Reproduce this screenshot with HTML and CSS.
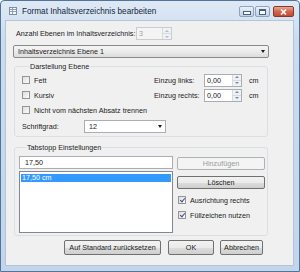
FILE: index.html
```html
<!DOCTYPE html>
<html lang="de">
<head>
    <meta charset="UTF-8">
    <title>Format Inhaltsverzeichnis bearbeiten</title>
    <link rel="stylesheet" href="styles.css">
</head>
<body>
    <div class="window">
        <div class="titlebar">
            <svg class="app-icon" width="8" height="8" viewBox="0 0 8 8">
                <rect x="0.5" y="0.5" width="7" height="7" fill="#f4f7fb" stroke="#7d8fa6"/>
                <path d="M1 2.5h6M1 4.5h6M3.5 1v6" stroke="#8fa2ba" stroke-width="1"/>
            </svg>
            <span class="title">Format Inhaltsverzeichnis bearbeiten</span>
            <div class="caption-buttons">
                <span class="cap cap-min"><i></i></span>
                <span class="cap cap-max"><i></i></span>
                <span class="cap cap-close">
                    <svg width="7" height="6" viewBox="0 0 7 6"><path d="M1 0.5l5 5M6 0.5l-5 5" stroke="#fff" stroke-width="1.6"/></svg>
                </span>
            </div>
        </div>

        <div class="client">
            <div class="count-row">
                <span class="count-label">Anzahl Ebenen im Inhaltsverzeichnis:</span>
                <div class="spin spin-disabled">
                    <span class="spin-value">3</span>
                    <span class="spin-arrows"><i class="up"></i><i class="down"></i></span>
                </div>
            </div>

            <div class="combo combo-level">
                <span>Inhaltsverzeichnis Ebene 1</span>
                <span class="arrow"></span>
            </div>

            <fieldset class="group group-style">
                <legend>Darstellung Ebene</legend>
                <div class="style-row">
                    <label class="check"><span class="box"></span>Fett</label>
                    <span class="indent-label">Einzug links:</span>
                    <div class="spin spin-indent">
                        <span class="spin-value">0,00</span>
                        <span class="spin-arrows"><i class="up"></i><i class="down"></i></span>
                    </div>
                    <span class="unit">cm</span>
                </div>
                <div class="style-row">
                    <label class="check"><span class="box"></span>Kursiv</label>
                    <span class="indent-label">Einzug rechts:</span>
                    <div class="spin spin-indent">
                        <span class="spin-value">0,00</span>
                        <span class="spin-arrows"><i class="up"></i><i class="down"></i></span>
                    </div>
                    <span class="unit">cm</span>
                </div>
                <div class="style-row">
                    <label class="check"><span class="box"></span>Nicht vom nächsten Absatz trennen</label>
                </div>
                <div class="style-row size-row">
                    <span class="size-label">Schriftgrad:</span>
                    <div class="combo combo-edit">
                        <span>12</span>
                        <span class="arrow"></span>
                    </div>
                </div>
            </fieldset>

            <fieldset class="group group-tabs">
                <legend>Tabstopp Einstellungen</legend>
                <div class="tabs-grid">
                    <div class="tabs-left">
                        <div class="textbox">17,50</div>
                        <div class="listbox">
                            <div class="list-item selected">17,50 cm</div>
                        </div>
                    </div>
                    <div class="tabs-right">
                        <button class="btn btn-disabled btn-add">Hinzufügen</button>
                        <button class="btn btn-delete">Löschen</button>
                        <label class="check check-align"><span class="box checked"></span>Ausrichtung rechts</label>
                        <label class="check check-fill"><span class="box checked"></span>Füllzeichen nutzen</label>
                    </div>
                </div>
            </fieldset>

            <div class="footer">
                <button class="btn btn-reset">Auf Standard zurücksetzen</button>
                <button class="btn btn-ok">OK</button>
                <button class="btn btn-cancel">Abbrechen</button>
            </div>
        </div>
    </div>
</body>
</html>
```

FILE: styles.css
```css
html, body {
    margin: 0;
    padding: 0;
    width: 300px;
    height: 272px;
    overflow: hidden;
}
body {
    font-family: "Liberation Sans", Arial, sans-serif;
    font-size: 7.2px;
    color: #1b1b1b;
    white-space: nowrap;
}
.window {
    box-sizing: border-box;
    width: 300px;
    height: 272px;
    display: flex;
    flex-direction: column;
    padding: 0 5px 5px 4px;
    background: linear-gradient(#dfe9f5, #cbdcee 40px, #c2d5ea);
    border: 1px solid #52739a;
    border-radius: 4px 4px 0 0;
}

/* title bar */
.titlebar {
    height: 19px;
    display: flex;
    align-items: center;
    position: relative;
}
.app-icon {
    margin-left: 4px;
    margin-top: 1px;
}
.title {
    margin-left: 5px;
    margin-top: 2px;
    font-size: 8.2px;
    color: #14253b;
}
.caption-buttons {
    position: absolute;
    right: 0;
    top: 5px;
    display: flex;
}
.cap {
    box-sizing: border-box;
    height: 11px;
    display: flex;
    align-items: center;
    justify-content: center;
    border: 1px solid #8ea3bd;
    border-radius: 2px;
    background: linear-gradient(#eaf1f9, #d3e0ef 50%, #c0d2e7);
}
.cap-min { width: 15px; }
.cap-max { width: 15px; margin-left: 1px; }
.cap-close {
    width: 21px;
    margin-left: 3px;
    border-color: #84392b;
    background: linear-gradient(#e9a896, #d3664f 50%, #c44a32);
}
.cap-min i {
    width: 6px;
    height: 2px;
    margin-top: 3px;
    background: #fff;
    border: 1px solid #4a6282;
}
.cap-max i {
    width: 5px;
    height: 3px;
    border: 1px solid #4a6282;
    border-top-width: 2px;
    background: #fff;
}

/* client area */
.client {
    flex: 1;
    display: flex;
    flex-direction: column;
    padding: 0 24px 0 7px;
    background: #f0f0f0;
    border: 1px solid #b3c5da;
}
.count-row {
    display: flex;
    align-items: center;
    margin-top: 6px;
    height: 13px;
}
.count-label {
    flex: 0 0 120px;
    padding-left: 3px;
}

.spin {
    box-sizing: border-box;
    display: flex;
    height: 13px;
    background: #fff;
    border: 1px solid #abadb3;
}
.spin-value {
    flex: 1;
    padding-left: 2px;
    line-height: 11px;
}
.spin-arrows {
    width: 8px;
    display: flex;
    flex-direction: column;
    border-left: 1px solid #d6dbe2;
}
.spin-arrows i {
    flex: 1;
    display: flex;
    align-items: center;
    justify-content: center;
    background: #eef1f5;
}
.spin-arrows i + i { border-top: 1px solid #d6dbe2; }
.spin-arrows .up::after,
.spin-arrows .down::after {
    content: "";
    border-left: 2px solid transparent;
    border-right: 2px solid transparent;
}
.spin-arrows .up::after { border-bottom: 2px solid #7c8a9c; }
.spin-arrows .down::after { border-top: 2px solid #7c8a9c; }
.spin-disabled {
    width: 36px;
    background: #f4f4f4;
    border-color: #c9ccd1;
    color: #a0a0a0;
}
.spin-disabled .spin-arrows i::after { opacity: 0.5; }

.combo {
    box-sizing: border-box;
    display: flex;
    align-items: center;
    justify-content: space-between;
    height: 13px;
    border: 1px solid #8a8a8a;
    border-radius: 2px;
}
.combo .arrow {
    margin-right: 3px;
    border-left: 2.5px solid transparent;
    border-right: 2.5px solid transparent;
    border-top: 3px solid #1a1a1a;
}
.combo-level {
    margin-top: 5px;
    padding-left: 4px;
    background: linear-gradient(#f5f5f5, #ebebeb 50%, #dcdcdc);
}
.combo-edit {
    width: 82px;
    padding-left: 4px;
    background: #fff;
    border-color: #abadb3;
    border-radius: 0;
}

/* group boxes */
.group {
    margin: 4px 1px 0 1px;
    border: 1px solid #dadfe3;
    border-radius: 3px;
    min-width: 0;
}
.group legend {
    padding: 0 1px;
    margin-left: 7px;
    line-height: 9px;
}
.group-style {
    padding: 2px 6px 3px 7px;
}
.style-row {
    display: flex;
    align-items: center;
    height: 14px;
}
.style-row + .style-row { margin-top: 1px; }
.size-row { margin-top: 2px !important; }
.style-row .check { flex: 0 0 132px; }
.indent-label { flex: 0 0 50px; }
.spin-indent { width: 38px; }
.unit { margin-left: 7px; }
.size-label { flex: 0 0 62px; }

.check {
    display: flex;
    align-items: center;
}
.box {
    box-sizing: border-box;
    width: 8px;
    height: 8px;
    margin-right: 4px;
    border: 1px solid #959595;
    background: linear-gradient(135deg, #dedede, #fbfbfb);
    position: relative;
}
.box.checked::after {
    content: "";
    position: absolute;
    left: 1.5px;
    top: 0;
    width: 2px;
    height: 4px;
    border-right: 1.4px solid #3c5180;
    border-bottom: 1.4px solid #3c5180;
    transform: rotate(40deg);
}

.group-tabs {
    margin-top: 6px;
    padding: 4px 4px 2px 4px;
}
.tabs-grid {
    display: grid;
    grid-template-columns: 154px 88px;
    column-gap: 4px;
}
.textbox {
    box-sizing: border-box;
    height: 13px;
    padding-left: 5px;
    line-height: 11px;
    background: #fff;
    border: 1px solid #abadb3;
}
.listbox {
    box-sizing: border-box;
    height: 62px;
    margin-top: 2px;
    padding: 2px 1px;
    background: #fff;
    border: 1px solid #828790;
}
.list-item {
    height: 8px;
    line-height: 8px;
    padding-left: 1px;
    color: #fff;
}
.list-item.selected { background: #3399ff; }

.tabs-right {
    display: flex;
    flex-direction: column;
}
.btn {
    box-sizing: border-box;
    height: 13px;
    padding: 0;
    font: inherit;
    color: #1b1b1b;
    border: 1px solid #707070;
    border-radius: 2px;
    background: linear-gradient(#f2f2f2, #ebebeb 50%, #dddddd 51%, #cfcfcf);
}
.btn-disabled {
    color: #9a9a9a;
    border-color: #adb2b5;
    background: #f4f4f4;
}
.btn-add { margin-top: 1px; }
.btn-delete { margin-top: 6px; }
.check-align { margin-top: 4px; height: 14px; padding-left: 1px; }
.check-fill { margin-top: 1px; height: 14px; padding-left: 1px; }

.footer {
    display: flex;
    justify-content: flex-end;
    margin-top: 4px;
    padding-right: 6px;
}
.footer .btn { height: 15px; }
.btn-reset { width: 97px; }
.btn-ok { width: 46px; margin-left: 7px; }
.btn-cancel { width: 43px; margin-left: 6px; }
```
